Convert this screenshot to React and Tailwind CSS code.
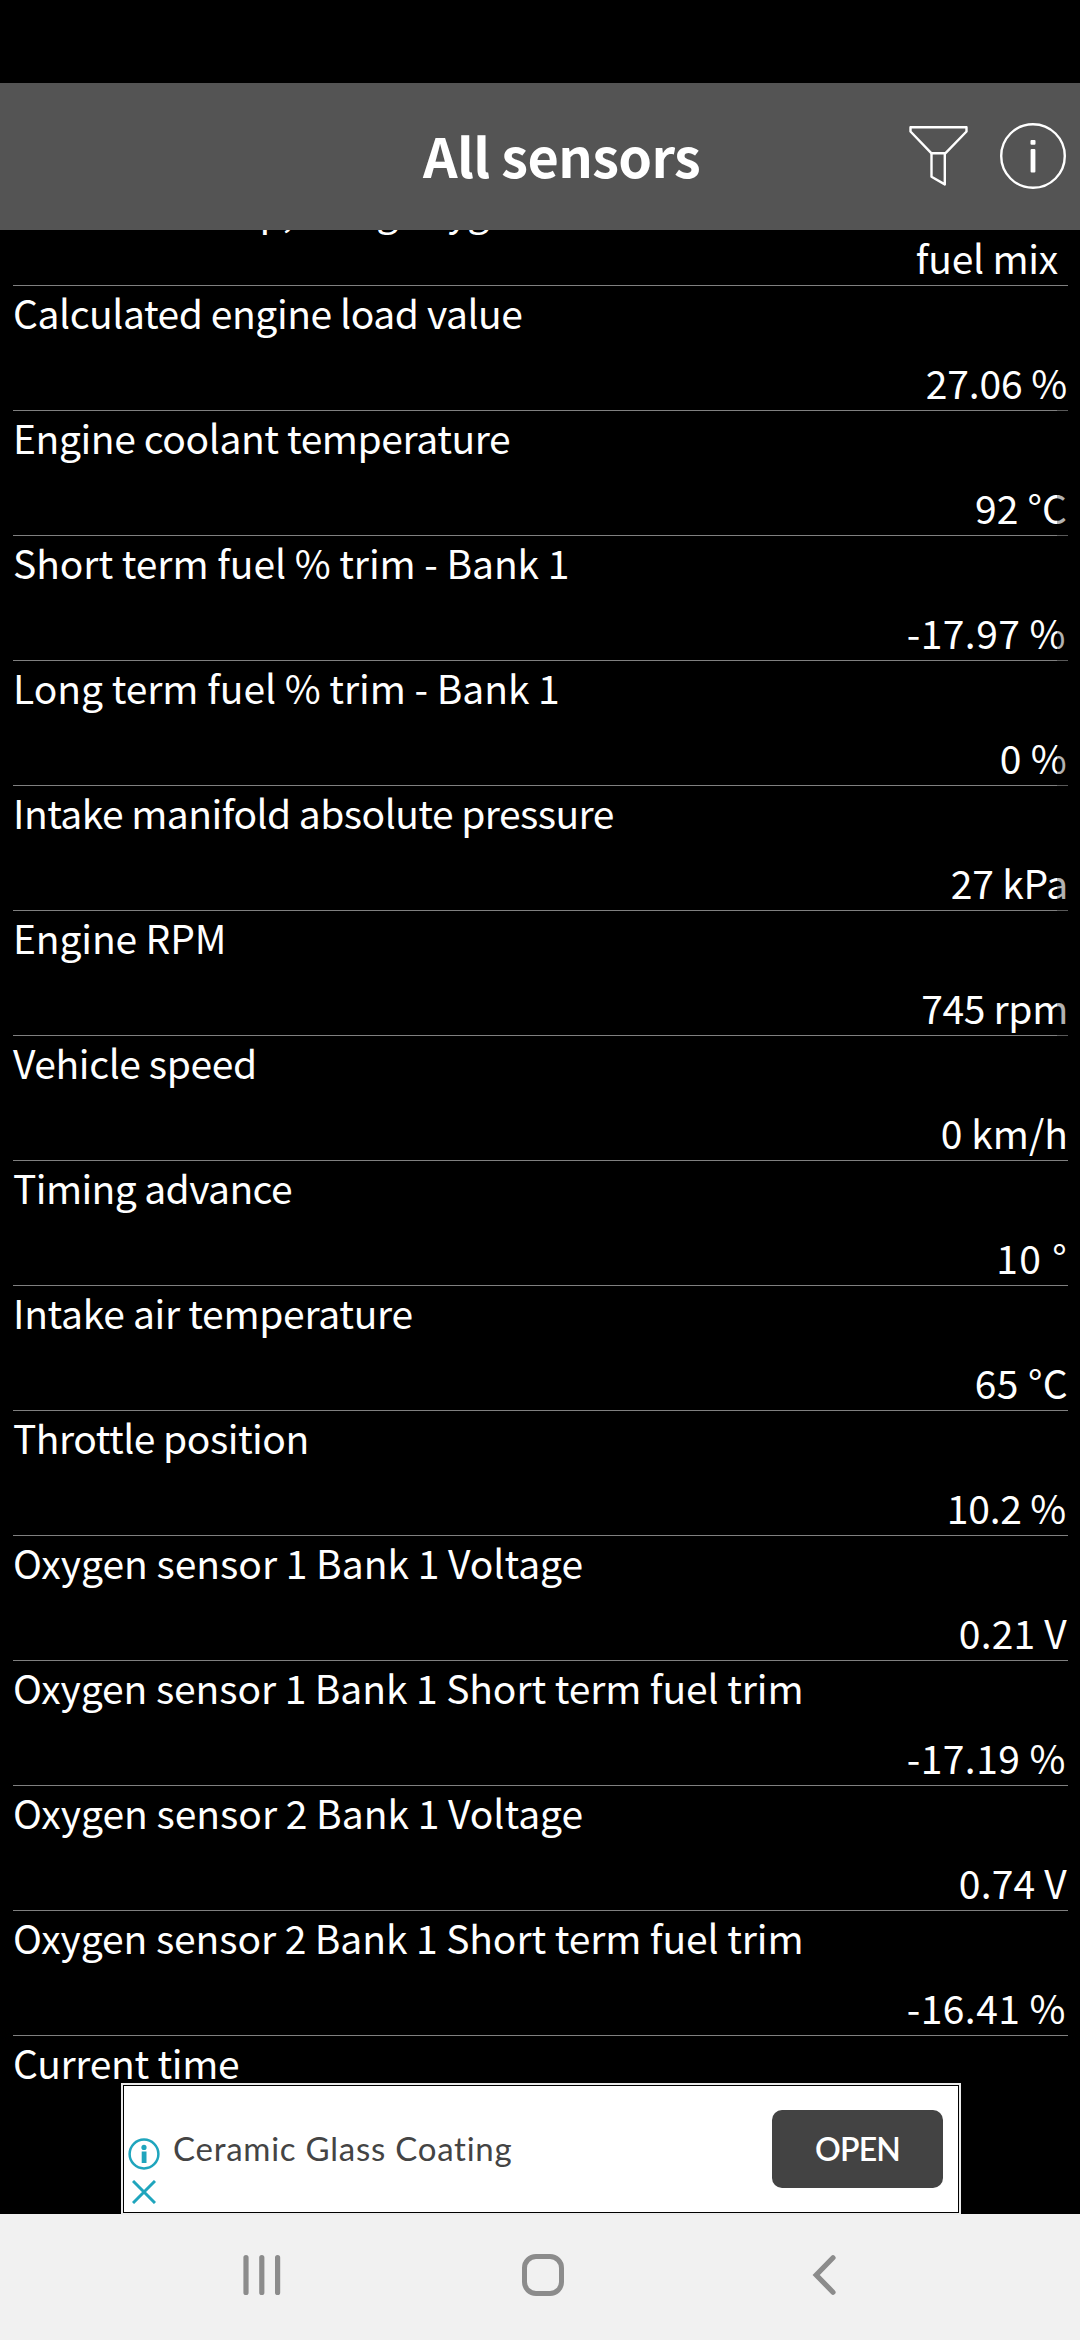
import React from "react";

const sensors = [
  { name: "Calculated engine load value", value: "27.06 %", nameClass: "tracking-[-0.43px]", valueClass: "tracking-[-0.11px] pr-[1px]" },
  { name: "Engine coolant temperature", value: "92 °C", nameClass: "tracking-[-0.41px]", valueClass: "tracking-[0.14px] pr-[1px]" },
  { name: "Short term fuel % trim - Bank 1", value: "-17.97 %", nameClass: "tracking-[-0.06px]", valueClass: "tracking-[0.47px] pr-[2px]" },
  { name: "Long term fuel % trim - Bank 1", value: "0 %", nameClass: "tracking-[-0.04px]", valueClass: "tracking-[0.31px] pr-[1px]" },
  { name: "Intake manifold absolute pressure", value: "27 kPa", nameClass: "tracking-[-0.54px]", valueClass: "tracking-[-0.17px]" },
  { name: "Engine RPM", value: "745 rpm", nameClass: "tracking-[-0.15px]", valueClass: "tracking-[-0.33px]" },
  { name: "Vehicle speed", value: "0 km/h", nameClass: "tracking-[-0.4px]", valueClass: "tracking-[0.04px]" },
  { name: "Timing advance", value: "10 °", nameClass: "tracking-[-0.6px]", valueClass: "tracking-[1.32px]" },
  { name: "Intake air temperature", value: "65 °C", nameClass: "tracking-[-0.3px]", valueClass: "tracking-[0.39px]" },
  { name: "Throttle position", value: "10.2 %", nameClass: "tracking-[-0.5px]", valueClass: "tracking-[-0.2px] pr-[2px]" },
  { name: "Oxygen sensor 1 Bank 1 Voltage", value: "0.21 V", nameClass: "tracking-[-0.02px]", valueClass: "tracking-[0.2px] pr-[1px]" },
  { name: "Oxygen sensor 1 Bank 1 Short term fuel trim", value: "-17.19 %", nameClass: "tracking-[-0.1px]", valueClass: "tracking-[0.47px] pr-[2px]" },
  { name: "Oxygen sensor 2 Bank 1 Voltage", value: "0.74 V", nameClass: "tracking-[-0.02px]", valueClass: "tracking-[0.2px] pr-[1px]" },
  { name: "Oxygen sensor 2 Bank 1 Short term fuel trim", value: "-16.41 %", nameClass: "tracking-[-0.1px]", valueClass: "tracking-[0.47px] pr-[2px]" },
];

function FilterIcon() {
  return (
    <svg className="h-[66px] w-[62px]" viewBox="0 0 62 66" fill="none" stroke="#fff" strokeWidth="2.4" strokeLinejoin="round">
      <path d="M3.5 4.2H59.5V8.5L38.3 30.3H24.5L3.5 8.5Z" />
      <path d="M24.5 30.3V53.8L37.8 61.4V30.3" />
    </svg>
  );
}

function InfoIcon() {
  return (
    <svg className="size-[66px]" viewBox="0 0 66 66" fill="none">
      <circle cx="33" cy="33" r="31.8" stroke="#fff" strokeWidth="2.4" />
      <rect x="30.5" y="17" width="5" height="4.8" rx="1" fill="#fff" />
      <rect x="30.6" y="26" width="4.8" height="23.5" rx="1" fill="#fff" />
    </svg>
  );
}

function Header() {
  return (
    <header className="flex h-[147px] shrink-0 items-center bg-[#545454] pr-[14px] pl-[423px]">
      <h1 className="pb-[4px] text-[54px] leading-[80px] font-bold tracking-[-0.63px] whitespace-nowrap">All sensors</h1>
      <div className="ml-auto flex items-center gap-[31px] pb-[1px]">
        <FilterIcon />
        <InfoIcon />
      </div>
    </header>
  );
}

function SensorRow({ name, value, nameClass, valueClass }) {
  return (
    <li className="flex h-[125px] shrink-0 flex-col justify-between border-b border-[#808080] pt-[2px] pb-[4px]">
      <span className={nameClass}>{name}</span>
      <span className={`self-end ${valueClass}`}>{value}</span>
    </li>
  );
}

function AdBanner() {
  return (
    <aside className="absolute top-[2083px] left-[121px] h-[132px] w-[840px] border-2 border-[#ececec] bg-white font-[Lato,sans-serif]">
      <div className="flex h-full items-center border border-black pr-[15px] pl-[4px]">
        <div className="flex flex-col items-center gap-[10px] pt-[43px]">
          <svg className="size-8" viewBox="0 0 32 32" fill="none">
            <circle cx="16" cy="16" r="14.4" stroke="#1fa5bd" strokeWidth="2.5" />
            <circle cx="16" cy="9.4" r="2.6" fill="#1fa5bd" />
            <rect x="13.7" y="13.5" width="4.8" height="11.5" fill="#1fa5bd" />
          </svg>
          <svg className="size-6" viewBox="0 0 24 24" fill="none" stroke="#1fa5bd" strokeWidth="3">
            <path d="M1 1L23 23M23 1L1 23" />
          </svg>
        </div>
        <span className="ml-[13px] pb-[3px] text-[33px] leading-[40px] tracking-[0.75px] whitespace-nowrap text-[#444]">Ceramic Glass Coating</span>
        <button className="ml-auto flex h-[78px] w-[171px] items-center justify-center rounded-[10px] bg-[#434343] text-[32px] font-semibold tracking-[-0.8px] text-white">
          OPEN
        </button>
      </div>
    </aside>
  );
}

function NavigationBar() {
  return (
    <nav className="flex h-[126px] shrink-0 items-center bg-[#f1f1f1] pr-[243px] pb-[4px] pl-[242px]">
      <svg className="h-[44px] w-[40px]" viewBox="0 0 40 44" stroke="#8c8c8c" strokeWidth="5.2" strokeLinecap="round">
        <path d="M4 4.6V39.4M19.8 4.6V39.4M35.6 4.6V39.4" />
      </svg>
      <svg className="ml-[239px] size-[44px]" viewBox="0 0 44 44" fill="none" stroke="#8c8c8c" strokeWidth="5">
        <rect x="3.5" y="3.5" width="37" height="37" rx="11.5" />
      </svg>
      <svg className="ml-auto h-[44px] w-[26px]" viewBox="0 0 26 44" fill="none" stroke="#8c8c8c" strokeWidth="5.2" strokeLinecap="round">
        <path d="M22 4.8L5.2 22L22 39.2" />
      </svg>
    </nav>
  );
}

export default function App() {
  return (
    <div className="relative flex h-[2340px] w-[1080px] flex-col overflow-hidden bg-black font-['Noto_Sans_CJK_SC','Noto_Sans',sans-serif] text-white">
      <div className="h-[83px] shrink-0" />
      <Header />
      <main className="min-h-0 flex-1 overflow-hidden pr-[12px] pl-[13px] text-[39px] leading-[48px] whitespace-nowrap">
        <ul className="flex flex-col">
          <li className="flex h-[56px] shrink-0 flex-col justify-end overflow-hidden border-b border-[#808080] pb-[4px] text-right">
            <span className="tracking-[-0.45px]">Closed loop, using oxygen sensor feedback to determine</span>
            <span className="pr-[10px] tracking-[-0.23px]">fuel mix</span>
          </li>
          {sensors.map((sensor) => (
            <SensorRow key={sensor.name} {...sensor} />
          ))}
          <li className="pt-[2px] tracking-[-0.3px]">Current time</li>
        </ul>
      </main>
      <div className="absolute top-[403px] right-[3px] h-[677px] w-[20px] bg-black/30" />
      <AdBanner />
      <NavigationBar />
    </div>
  );
}
